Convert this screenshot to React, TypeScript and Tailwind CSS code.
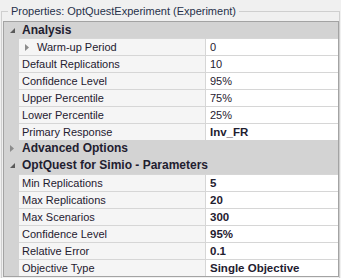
const Expanded = () => (
  <svg width="5" height="5" viewBox="0 0 5 5" className="block">
    <polygon points="5,0 5,5 0,5" fill="#5a5a5a" />
  </svg>
);

const Collapsed = () => (
  <svg width="4" height="7" viewBox="0 0 4 7" className="block">
    <polygon points="0,0 4,3.5 0,7" fill="#8c8c8c" />
  </svg>
);

type PropRow = { name: string; value: string; bold?: boolean; child?: boolean };

const analysis: PropRow[] = [
  { name: "Warm-up Period", value: "0", child: true },
  { name: "Default Replications", value: "10" },
  { name: "Confidence Level", value: "95%" },
  { name: "Upper Percentile", value: "75%" },
  { name: "Lower Percentile", value: "25%" },
  { name: "Primary Response", value: "Inv_FR", bold: true },
];

const optquest: PropRow[] = [
  { name: "Min Replications", value: "5", bold: true },
  { name: "Max Replications", value: "20", bold: true },
  { name: "Max Scenarios", value: "300", bold: true },
  { name: "Confidence Level", value: "95%", bold: true },
  { name: "Relative Error", value: "0.1", bold: true },
  { name: "Objective Type", value: "Single Objective", bold: true },
];

const Category = ({ title, open, first }: { title: string; open: boolean; first?: boolean }) => (
  <div className={`flex items-center bg-[#d3d3d3] ${first ? "h-[16px]" : "h-[17px]"}`}>
    <div className="w-[15px] flex items-center pl-[6px]">{open ? <Expanded /> : <Collapsed />}</div>
    <span className="pl-[3px] font-bold text-[12px]">{title}</span>
  </div>
);

const Row = ({ row }: { row: PropRow }) => (
  <div className="flex h-[17px]">
    <div className="w-[15px] bg-[#d3d3d3]" />
    <div className="flex flex-1 border-t border-[#d6d6d6]">
      <div className="w-[187px] bg-[#f5f5f5] border-r border-[#d6d6d6] flex items-center">
        {row.child ? (
          <div className="flex items-center pl-[6px]">
            <Collapsed />
            <span className="pl-[8px]">{row.name}</span>
          </div>
        ) : (
          <span className="pl-[3px]">{row.name}</span>
        )}
      </div>
      <div className={`flex-1 bg-white flex items-center pl-[4px] ${row.bold ? "font-bold text-[11.5px]" : ""}`}>
        {row.value}
      </div>
    </div>
  </div>
);

export default function App() {
  return (
    <div className="w-[341px] h-[278px] overflow-hidden bg-[#f0f0f0] font-['Liberation_Sans',Arial,sans-serif]">
      <fieldset className="mt-[3px] ml-[1px] mr-[1px] h-[300px] border border-[#cfcfcf] border-b-0">
        <legend className="ml-[6px] px-[3px] text-[11px] leading-[16px] text-[#27304a]">
          Properties: OptQuestExperiment (Experiment)
        </legend>
        <div className="mt-[2px] ml-[1px] border border-[#a3a3a3] text-[11px] leading-[13px] text-[#1f2030]">
          <Category title="Analysis" open first />
          {analysis.map((r) => (
            <Row key={r.name} row={r} />
          ))}
          <Category title="Advanced Options" open={false} />
          <Category title="OptQuest for Simio - Parameters" open />
          {optquest.map((r) => (
            <Row key={r.name} row={r} />
          ))}
        </div>
      </fieldset>
    </div>
  );
}
